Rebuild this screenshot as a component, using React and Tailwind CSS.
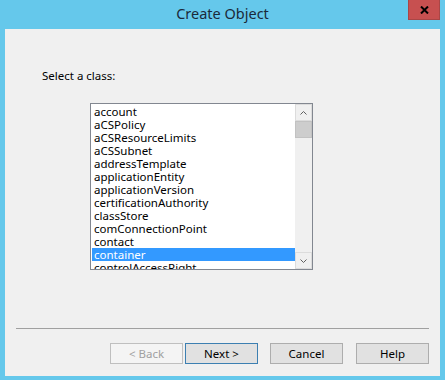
import { useState } from "react";

const classes = [
  "account",
  "aCSPolicy",
  "aCSResourceLimits",
  "aCSSubnet",
  "addressTemplate",
  "applicationEntity",
  "applicationVersion",
  "certificationAuthority",
  "classStore",
  "comConnectionPoint",
  "contact",
  "container",
  "controlAccessRight",
];

export default function App() {
  const [selected, setSelected] = useState("container");

  return (
    <div className="w-[445px] h-[380px] bg-[#65c8eb] flex flex-col font-['Noto_Sans',sans-serif] text-[11.5px] text-black select-none">
      {/* title bar */}
      <div className="relative h-[29px] shrink-0 flex items-center justify-center">
        <span className="text-[14.5px] text-[#1b2a3a] leading-none mt-[-2px]">Create Object</span>
        <button className="absolute right-[5px] top-0 w-[32px] h-[20px] bg-[#c75050] border border-[#a94646] border-t-0 flex items-center justify-center">
          <svg className="w-[9px] h-[8px]" viewBox="0 0 9 8">
            <path d="M1 0.5 L8 7.5 M8 0.5 L1 7.5" stroke="#000" strokeWidth="2" />
          </svg>
        </button>
      </div>

      {/* client area */}
      <div className="mx-[5px] h-[347px] bg-[#f0f0f0] flex flex-col">
        <div className="mt-[39px] ml-[37px] leading-[15px]">Select a class:</div>

        <div className="mt-[20px] ml-[85px] w-[223px] h-[167px] bg-white border border-[#828790] flex overflow-hidden">
          <div className="flex-1 pt-[1px] pl-[1px] overflow-hidden">
            {classes.map((c) => (
              <div
                key={c}
                onClick={() => setSelected(c)}
                className={`h-[13px] leading-[13px] pl-[2px] whitespace-nowrap ${
                  selected === c ? "bg-[#3399ff] text-white" : ""
                }`}
              >
                {c}
              </div>
            ))}
          </div>
          <div className="w-[17px] bg-[#f0f0f0] flex flex-col">
            <div className="h-[17px] border border-[#dcdcdc] bg-[#f0f0f0] flex items-center justify-center">
              <svg className="w-[7px] h-[4px]" viewBox="0 0 7 4">
                <path d="M0.5 3.5 L3.5 0.5 L6.5 3.5" stroke="#606060" fill="none" strokeWidth="1" />
              </svg>
            </div>
            <div className="h-[17px] bg-[#cdcdcd] border border-[#c2c2c2]" />
            <div className="flex-1" />
            <div className="h-[17px] border border-[#dcdcdc] bg-[#f0f0f0] flex items-center justify-center">
              <svg className="w-[7px] h-[4px]" viewBox="0 0 7 4">
                <path d="M0.5 0.5 L3.5 3.5 L6.5 0.5" stroke="#606060" fill="none" strokeWidth="1" />
              </svg>
            </div>
          </div>
        </div>

        <div className="mt-[58px] mx-[11px] h-px bg-[#a0a0a0]" />

        <div className="mt-[14px] mr-[11px] flex justify-end">
          <button disabled className="w-[73px] h-[21px] border border-[#bfbfbf] bg-[#f4f4f4] text-[#a0a0a0]">
            &lt; Back
          </button>
          <button className="ml-[2px] w-[73px] h-[21px] border border-[#3c7fb1] bg-[#e1e1e1]">
            Next &gt;
          </button>
          <button className="ml-[12px] w-[73px] h-[21px] border border-[#adadad] bg-[#e1e1e1]">
            Cancel
          </button>
          <button className="ml-[13px] w-[73px] h-[21px] border border-[#adadad] bg-[#e1e1e1]">
            Help
          </button>
        </div>
      </div>
    </div>
  );
}
